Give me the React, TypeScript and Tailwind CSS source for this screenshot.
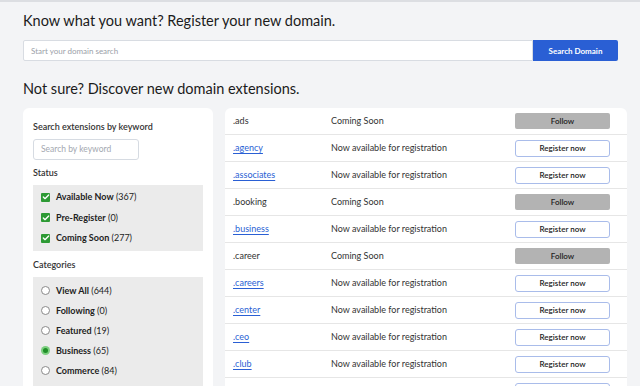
import { Check } from "lucide-react";

const font = { fontFamily: "Lato, 'Noto Sans', sans-serif" };

const statuses = [
  { label: "Available Now", count: 367 },
  { label: "Pre-Register", count: 0 },
  { label: "Coming Soon", count: 277 },
];

const categories = [
  { label: "View All", count: 644 },
  { label: "Following", count: 0 },
  { label: "Featured", count: 19 },
  { label: "Business", count: 65, checked: true },
  { label: "Commerce", count: 84 },
  { label: "Education", count: 12 },
];

const rows: { tld: string; soon?: boolean }[] = [
  { tld: ".ads", soon: true },
  { tld: ".agency" },
  { tld: ".associates" },
  { tld: ".booking", soon: true },
  { tld: ".business" },
  { tld: ".career", soon: true },
  { tld: ".careers" },
  { tld: ".center" },
  { tld: ".ceo" },
  { tld: ".club" },
  { tld: ".company" },
];

function Filters() {
  return (
    <aside className="w-[190px] shrink-0 rounded-t-md bg-white px-[10px] pt-[13px]">
      <p className="text-[9px] leading-[12px] font-semibold text-[#333]">Search extensions by keyword</p>
      <div className="mt-[6px] flex h-[21px] w-[106px] items-center rounded-[3px] border border-[#d6dbe2] px-[7px] text-[8.5px] text-[#a3a8b0]">
        Search by keyword
      </div>
      <p className="mt-[7px] text-[9px] leading-[12px] font-semibold text-[#333]">Status</p>
      <div className="mt-[6px] flex flex-col gap-[8.5px] bg-[#ebebeb] px-[8px] pt-[6px] pb-[7px]">
        {statuses.map((s) => (
          <label key={s.label} className="flex h-[12px] items-center gap-[6px] text-[9px] text-[#222]">
            <span className="flex h-[9px] w-[9px] items-center justify-center rounded-[1px] bg-[#2d9a34]">
              <Check className="h-[8px] w-[8px] text-white" strokeWidth={4} />
            </span>
            <span>
              <span className="font-bold">{s.label}</span> ({s.count})
            </span>
          </label>
        ))}
      </div>
      <p className="mt-[8px] text-[9px] leading-[12px] font-semibold text-[#333]">Categories</p>
      <div className="mt-[6px] flex flex-col gap-[8px] bg-[#ebebeb] px-[8px] pt-[7px] pb-[8px]">
        {categories.map((c) => (
          <label key={c.label} className="flex h-[12px] items-center gap-[6px] text-[9px] text-[#222]">
            <span
              className={
                c.checked
                  ? "flex h-[9px] w-[9px] items-center justify-center rounded-full bg-[#7ccf7f]"
                  : "h-[9px] w-[9px] rounded-full border border-[#8a8a8a] bg-white"
              }
            >
              {c.checked ? <span className="h-[5px] w-[5px] rounded-full bg-[#1f8e27]" /> : null}
            </span>
            <span className="translate-y-[1px]">
              <span className="font-bold">{c.label}</span> ({c.count})
            </span>
          </label>
        ))}
      </div>
    </aside>
  );
}

function ResultTable() {
  return (
    <div className="ml-[12px] w-[402px] rounded-t-md bg-white">
      {rows.map((r) => (
        <div
          key={r.tld}
          className="flex h-[27px] items-center border-b border-[#e6e6e6] pl-[8px] text-[9px] text-[#333]"
        >
          <span
            className={
              r.soon ? "w-[98px]" : "w-[98px] text-[#2a5fd4] underline underline-offset-2"
            }
          >
            {r.tld}
          </span>
          <span className="w-[184px]">{r.soon ? "Coming Soon" : "Now available for registration"}</span>
          {r.soon ? (
            <button className="h-[16px] w-[95px] rounded-[2px] bg-[#b3b3b3] text-[8px] font-semibold text-[#222]">
              Follow
            </button>
          ) : (
            <button className="h-[17px] w-[95px] rounded-[3px] border border-[#a9bcea] bg-white text-[8px] font-semibold text-[#222]">
              Register now
            </button>
          )}
        </div>
      ))}
    </div>
  );
}

export default function App() {
  return (
    <div className="h-[386px] w-[640px] overflow-hidden border-t-2 border-[#dcdee2] bg-[#f3f4f6]" style={font}>
      <div className="pl-[23px] pt-[9px]">
        <h1 className="text-[14.5px] leading-[20px] text-[#1b1b1b]">
          Know what you want? Register your new domain.
        </h1>
        <div className="mt-[9px] flex h-[21px] w-[595px]">
          <div className="flex flex-1 items-center rounded-l-[2px] border border-[#d8dce2] bg-white px-[7px] text-[8px] text-[#9aa0a8]">
            Start your domain search
          </div>
          <button className="w-[85px] rounded-r-[2px] bg-[#2a5fd4] text-[8px] font-bold text-white">
            Search Domain
          </button>
        </div>
        <h2 className="mt-[18px] text-[14.5px] leading-[20px] text-[#1b1b1b]">
          Not sure? Discover new domain extensions.
        </h2>
        <div className="mt-[9px] flex items-start">
          <Filters />
          <ResultTable />
        </div>
      </div>
    </div>
  );
}
